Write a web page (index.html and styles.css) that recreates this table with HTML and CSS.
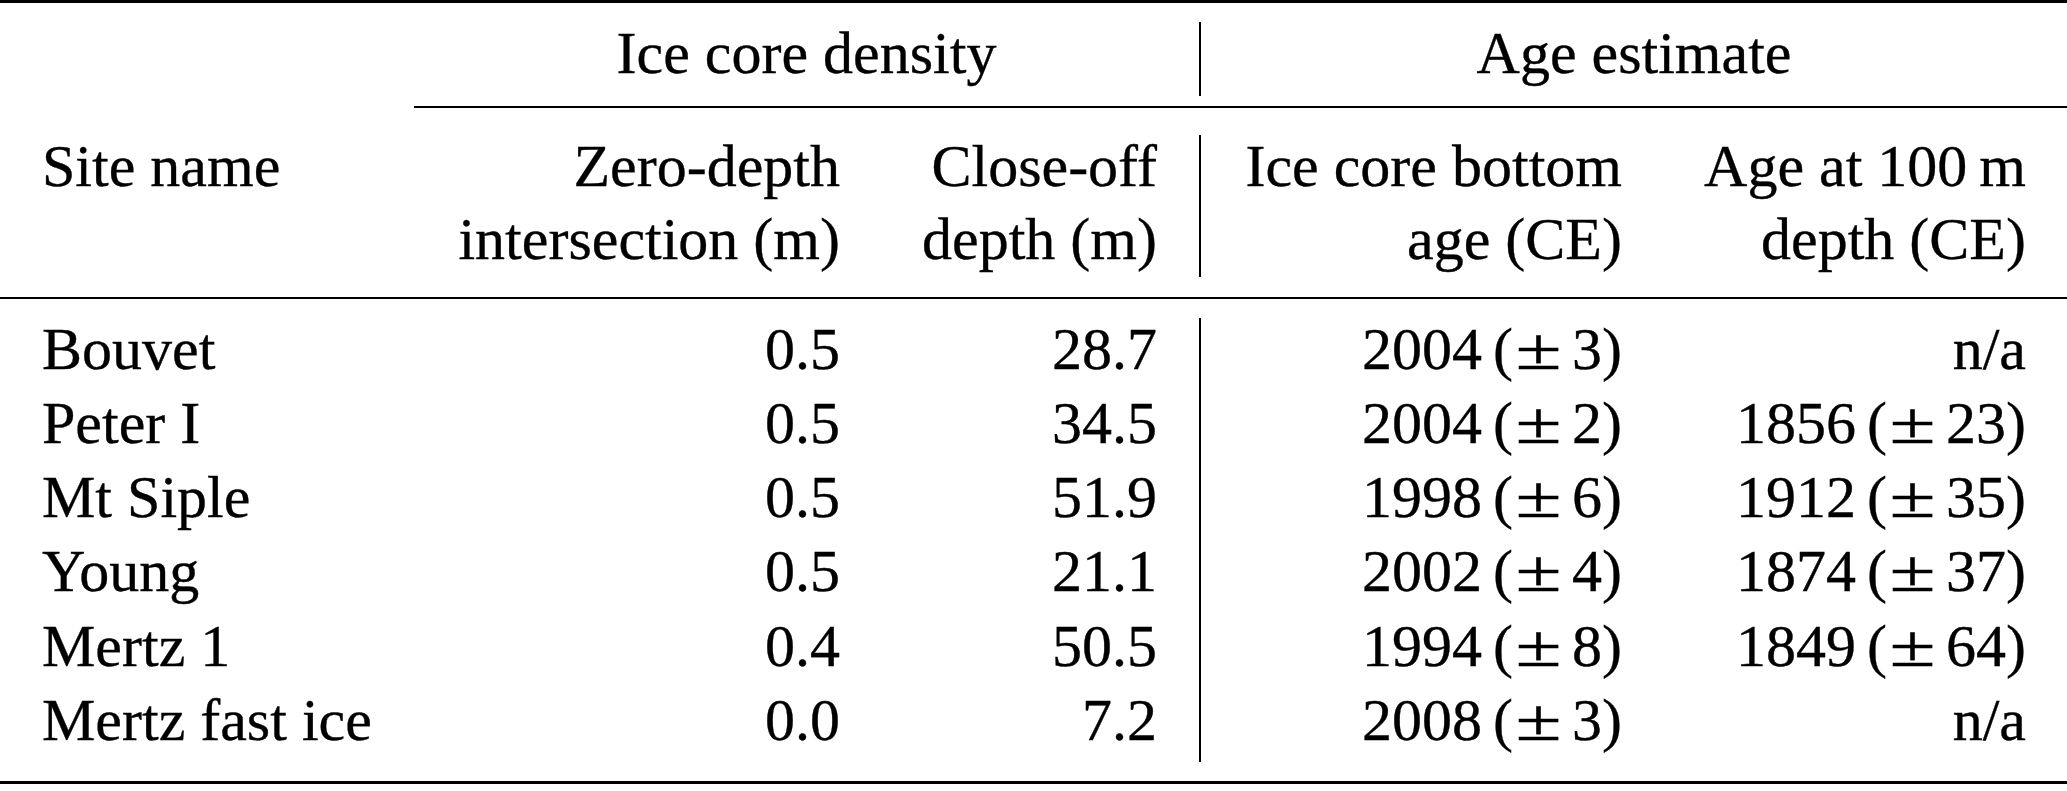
FILE: index.html
```html
<!DOCTYPE html>
<html lang="en">
<head>
<meta charset="utf-8">
<title>Ice core sites</title>
<link rel="stylesheet" href="styles.css">
</head>
<body>
<div class="tbl">
  <div class="rule top"></div>

  <div class="grid head1">
    <div class="cell"></div>
    <div class="cell span23 center"><div class="t">Ice core density</div></div>
    <div class="cell span45 center vline"><div class="t">Age estimate</div></div>
  </div>

  <div class="cmid"></div>

  <div class="grid head2">
    <div class="cell left"><div class="t">Site name</div></div>
    <div class="cell right c2"><div class="t">Zero-depth<br>intersection (m)</div></div>
    <div class="cell right c3"><div class="t">Close-off<br>depth (m)</div></div>
    <div class="cell right c4 vline"><div class="t">Ice core bottom<br>age (CE)</div></div>
    <div class="cell right c5"><div class="t">Age at 100&thinsp;m<br>depth (CE)</div></div>
  </div>

  <div class="rule mid"></div>

  <div class="grid body">
    <div class="cell left"><div class="t">Bouvet</div></div>
    <div class="cell right c2"><div class="t">0.5</div></div>
    <div class="cell right c3"><div class="t">28.7</div></div>
    <div class="cell right c4 vline"><div class="t age">2004 (<span class="pm">±</span>3)</div></div>
    <div class="cell right c5"><div class="t">n/a</div></div>

    <div class="cell left"><div class="t">Peter I</div></div>
    <div class="cell right c2"><div class="t">0.5</div></div>
    <div class="cell right c3"><div class="t">34.5</div></div>
    <div class="cell right c4 vline"><div class="t age">2004 (<span class="pm">±</span>2)</div></div>
    <div class="cell right c5"><div class="t age">1856 (<span class="pm">±</span>23)</div></div>

    <div class="cell left"><div class="t">Mt Siple</div></div>
    <div class="cell right c2"><div class="t">0.5</div></div>
    <div class="cell right c3"><div class="t">51.9</div></div>
    <div class="cell right c4 vline"><div class="t age">1998 (<span class="pm">±</span>6)</div></div>
    <div class="cell right c5"><div class="t age">1912 (<span class="pm">±</span>35)</div></div>

    <div class="cell left"><div class="t">Young</div></div>
    <div class="cell right c2"><div class="t">0.5</div></div>
    <div class="cell right c3"><div class="t">21.1</div></div>
    <div class="cell right c4 vline"><div class="t age">2002 (<span class="pm">±</span>4)</div></div>
    <div class="cell right c5"><div class="t age">1874 (<span class="pm">±</span>37)</div></div>

    <div class="cell left"><div class="t">Mertz 1</div></div>
    <div class="cell right c2"><div class="t">0.4</div></div>
    <div class="cell right c3"><div class="t">50.5</div></div>
    <div class="cell right c4 vline"><div class="t age">1994 (<span class="pm">±</span>8)</div></div>
    <div class="cell right c5"><div class="t age">1849 (<span class="pm">±</span>64)</div></div>

    <div class="cell left"><div class="t">Mertz fast ice</div></div>
    <div class="cell right c2"><div class="t">0.0</div></div>
    <div class="cell right c3"><div class="t">7.2</div></div>
    <div class="cell right c4 vline"><div class="t age">2008 (<span class="pm">±</span>3)</div></div>
    <div class="cell right c5"><div class="t">n/a</div></div>
  </div>

  <div class="rule bottom"></div>
</div>
</body>
</html>
```

FILE: styles.css
```css
html, body {
  margin: 0;
  padding: 0;
  background: #ffffff;
}

body {
  font-family: "Liberation Serif", "Tinos", "Times New Roman", serif;
  font-size: 60px;
  color: #000000;
  -webkit-text-stroke: 0.35px #000000;
}

.tbl {
  width: 2067px;
  display: flex;
  flex-direction: column;
}

.rule {
  background: #000000;
}

.top {
  height: 2.5px;
  margin-bottom: 19.5px;
}

.cmid {
  height: 2px;
  margin-left: 414px;
  background: #000000;
  margin-top: 10px;
  margin-bottom: 27.5px;
}

.mid {
  height: 2.5px;
  margin-top: 20px;
  margin-bottom: 18.5px;
}

.bottom {
  height: 3px;
  margin-top: 19px;
}

.grid {
  display: grid;
  grid-template-columns: 414px 466px 319px 463px 405px;
}

.head1 {
  grid-template-rows: 73.5px;
  line-height: 73.5px;
}

.head2 {
  line-height: 73.5px;
}

.body {
  grid-auto-rows: 74.17px;
  line-height: 74.17px;
}

.cell {
  white-space: nowrap;
}

.t {
  margin-top: -5.5px;
}

.age {
  word-spacing: -4px;
}

.span23 {
  grid-column: 2 / 4;
}

.span45 {
  grid-column: 4 / 6;
}

.center {
  text-align: center;
}

.left {
  text-align: left;
  padding-left: 42px;
}

.right {
  text-align: right;
}

.c2 {
  padding-right: 40px;
}

.c3 {
  padding-right: 42px;
}

.c4 {
  padding-right: 40px;
}

.c5 {
  padding-right: 41px;
}

.vline {
  border-left: 2px solid #000000;
}

.pm {
  display: inline-block;
  transform: scaleX(1.4);
  margin: 0 17px 0 9px;
}
```
